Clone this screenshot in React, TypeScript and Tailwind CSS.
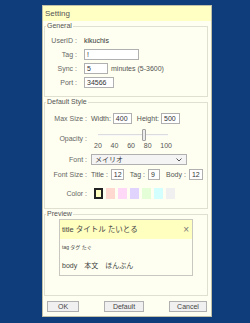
import React from "react";

const font = { fontFamily: '"Liberation Sans", "Noto Sans CJK JP", sans-serif' };

function Input({ w, value }: { w: string; value: string }) {
  return (
    <div className={`${w} h-[11px] bg-white border border-[#b0b0b0] text-[7px] leading-[9px] pl-[2px] text-[#333] overflow-hidden`}>
      {value}
    </div>
  );
}

function GLabel({ children }: { children: React.ReactNode }) {
  return <div className="w-[32px] text-right text-[#666] shrink-0">{children}</div>;
}
function DLabel({ children }: { children: React.ReactNode }) {
  return <div className="w-[42px] text-right text-[#666] shrink-0">{children}</div>;
}

export default function App() {
  const swatches = ["#ffd8d0", "#ffd8f8", "#e0d4ff", "#e4ffd8", "#d4ffff", "#f0f0f0"];
  return (
    <div className="w-[250px] h-[323px] bg-[#0f3d7b] pt-[5px] pl-[42px]" style={font}>
      <div className="w-[170px] h-[312px] bg-[#fefff0] border border-[#c0c0a8] flex flex-col text-[7px] leading-[9px] text-[#444]">
        <div className="h-[15px] bg-[#ffffc4] text-[8px] leading-[15px] pl-[2px] text-[#555]">Setting</div>
        <div className="pl-[1px] pr-[3px] flex flex-col">
          {/* General */}
          <fieldset className="border border-[#e0e0d0] m-0 p-0 pt-[4px] pb-[6px] mt-[1px]">
            <legend className="ml-[1px] px-[1px] leading-[8px] text-[#555]">General</legend>
            <div className="flex items-center h-[13px]">
              <GLabel>UserID :</GLabel>
              <div className="ml-[7px] text-[#333]">kikuchis</div>
            </div>
            <div className="flex items-center h-[14px]">
              <GLabel>Tag :</GLabel>
              <div className="ml-[7px]"><Input w="w-[55px]" value="!" /></div>
            </div>
            <div className="flex items-center h-[14px]">
              <GLabel>Sync :</GLabel>
              <div className="ml-[7px]"><Input w="w-[24px]" value="5" /></div>
              <div className="ml-[3px] text-[#555]">minutes (5-3600)</div>
            </div>
            <div className="flex items-center h-[15px]">
              <GLabel>Port :</GLabel>
              <div className="ml-[7px]"><Input w="w-[30px]" value="34566" /></div>
            </div>
          </fieldset>

          {/* Default Style */}
          <fieldset className="border border-[#e0e0d0] m-0 p-0 pt-[5px] pb-[7px] mt-[1px]">
            <legend className="ml-[1px] px-[1px] leading-[8px] text-[#555]">Default Style</legend>
            <div className="flex items-center h-[14px]">
              <DLabel>Max Size :</DLabel>
              <div className="ml-[4px] text-[#555]">Width:</div>
              <div className="ml-[2px]"><Input w="w-[19px]" value="400" /></div>
              <div className="ml-[5px] text-[#555]">Height:</div>
              <div className="ml-[2px]"><Input w="w-[19px]" value="500" /></div>
            </div>
            <div className="flex items-center h-[27px]">
              <DLabel>Opacity :</DLabel>
              <div className="ml-[7px] w-[78px] flex flex-col">
                <div className="relative h-[14px] mx-[4px]">
                  <div className="absolute left-0 right-0 top-[6px] h-[2px] bg-[#dcdcdc] border-b border-[#f8f8f8]" />
                  <div className="absolute left-[44px] top-[1px] w-[4px] h-[12px] bg-[#ececec] border border-[#a0a0a0] rounded-[1px]" />
                </div>
                <div className="flex justify-between text-[#555] leading-[8px]">
                  <span>20</span><span>40</span><span>60</span><span>80</span><span>100</span>
                </div>
              </div>
            </div>
            <div className="flex items-center h-[15px]">
              <DLabel>Font :</DLabel>
              <div className="ml-[4px] w-[96px] h-[11px] bg-[#f4f4f4] border border-[#b0b0b0] flex items-center justify-between pl-[3px] pr-[4px]">
                <span className="text-[#333]">メイリオ</span>
                <svg width="6" height="4" viewBox="0 0 6 4"><path d="M0.5 0.5 L3 3 L5.5 0.5" stroke="#555" strokeWidth="1" fill="none" /></svg>
              </div>
            </div>
            <div className="flex items-center h-[14px]">
              <DLabel>Font Size :</DLabel>
              <div className="ml-[4px] text-[#555]">Title :</div>
              <div className="ml-[3px]"><Input w="w-[13px]" value="12" /></div>
              <div className="ml-[6px] text-[#555]">Tag :</div>
              <div className="ml-[3px]"><Input w="w-[12px]" value="9" /></div>
              <div className="ml-[6px] text-[#555]">Body :</div>
              <div className="ml-[3px]"><Input w="w-[14px]" value="12" /></div>
            </div>
            <div className="flex items-center h-[16px] mt-[4px]">
              <DLabel>Color :</DLabel>
              <div className="ml-[7px] flex gap-[3px]">
                <div className="w-[9px] h-[11px] bg-[#ffffc0] border-2 border-[#222]" />
                {swatches.map((c) => (
                  <div key={c} className="w-[9px] h-[11px]" style={{ background: c }} />
                ))}
              </div>
            </div>
          </fieldset>

          {/* Preview */}
          <fieldset className="border border-[#e0e0d0] m-0 p-0 pt-[1px] pb-[19px] mt-[1px]">
            <legend className="ml-[1px] px-[1px] leading-[8px] text-[#555]">Preview</legend>
            <div className="ml-[14px] w-[134px] h-[57px] border border-[#c8c8c0] bg-[#fefff0] flex flex-col">
              <div className="h-[19px] bg-[#ffffc0] flex items-center justify-between pl-[2px] pr-[3px]">
                <span className="text-[7.5px] text-[#444]">title タイトル たいとる</span>
                <span className="text-[10px] leading-[10px] text-[#777]">×</span>
              </div>
              <div className="h-[17px] flex items-center pl-[2px] text-[5px] text-[#444]">tag タグ たぐ</div>
              <div className="h-[19px] flex items-center pl-[2px] text-[7px] text-[#444]">body　本文　ほんぶん</div>
            </div>
          </fieldset>

          {/* Buttons */}
          <div className="flex justify-between mt-[5px] pl-[3px] pr-[1px]">
            <div className="w-[32px] h-[11px] bg-[#f0f0f0] border border-[#b0b0b0] text-center leading-[9px] text-[#444]">OK</div>
            <div className="w-[40px] h-[11px] bg-[#f0f0f0] border border-[#b0b0b0] text-center leading-[9px] text-[#444]">Default</div>
            <div className="w-[38px] h-[11px] bg-[#f0f0f0] border border-[#b0b0b0] text-center leading-[9px] text-[#444]">Cancel</div>
          </div>
        </div>
      </div>
    </div>
  );
}
